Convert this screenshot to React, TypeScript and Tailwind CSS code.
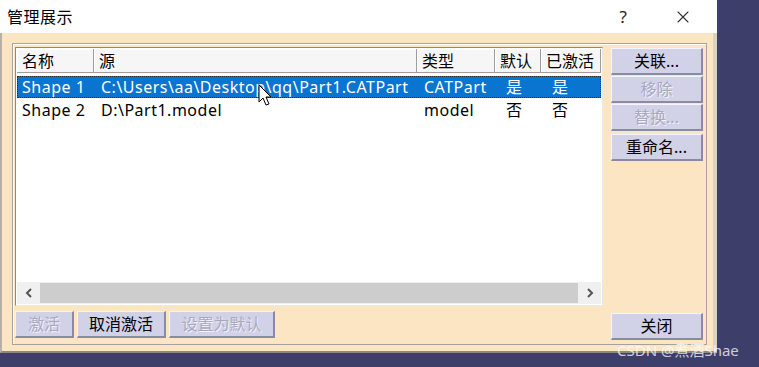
import { X } from "lucide-react";

const COLS = [
  { label: "名称", w: "w-[77px]" },
  { label: "源", w: "w-[323px]" },
  { label: "类型", w: "w-[78px]" },
  { label: "默认", w: "w-[46px]" },
  { label: "已激活", w: "w-[60px]" },
];

const ROWS = [
  { name: "Shape 1", src: "C:\\Users\\aa\\Desktop\\qq\\Part1.CATPart", type: "CATPart", def: "是", act: "是", selected: true },
  { name: "Shape 2", src: "D:\\Part1.model", type: "model", def: "否", act: "否", selected: false },
];

function CatButton({ label, disabled, className = "" }: { label: string; disabled?: boolean; className?: string }) {
  return (
    <div
      className={
        "flex items-center justify-center h-[27px] bg-[#d1d1e8] border-t border-l border-t-[#f4f4ff] border-l-[#f4f4ff] border-b-2 border-r-2 border-b-[#8a8aa0] border-r-[#8a8aa0] text-[16px] leading-none " +
        (disabled ? "text-[#a9a9bd] [text-shadow:1px_1px_0_#f2f2ff] " : "text-black ") +
        className
      }
    >
      {label}
    </div>
  );
}

export default function App() {
  return (
    <div
      className="relative w-[759px] h-[367px] bg-[#3e3e6b] overflow-hidden"
      style={{ fontFamily: '"Noto Sans", "Noto Sans CJK SC", sans-serif' }}
    >
      {/* dialog */}
      <div className="w-[717px] h-[353px] flex flex-col bg-white">
        {/* title bar */}
        <div className="h-[33px] flex items-center pl-[7px] pr-[24px] shrink-0">
          <span className="text-[16px] text-black tracking-[0.5px]">管理展示</span>
          <span className="ml-auto text-[17px] text-[#222] mr-[46px]">?</span>
          <X className="w-[20px] h-[20px] text-[#333]" strokeWidth={1.3} />
        </div>

        {/* body */}
        <div className="flex-1 bg-[#fce5c3] border-l-2 border-r-4 border-b-2 border-l-[#b8b0a4] border-r-[#d8d2c8] border-b-[#8c8780] pt-[10px] pl-[10px] pr-[6px] pb-[6px] flex">
          {/* group box */}
          <div className="flex-1 border border-[#a8a39a] shadow-[inset_1px_1px_0_#ffffff] pt-[3px] pl-[2px] pr-[3px] grid grid-cols-[588px_92px] grid-rows-[259px_auto] gap-x-[8px] gap-y-[5px] content-start">
            {/* list view */}
            <div className="bg-white border border-[#8a8a8a] border-b-[#e8e8e8] border-r-[#e8e8e8] flex flex-col">
              <div className="flex mt-[1px] ml-[1px] h-[24px] shrink-0">
                {COLS.map((c) => (
                  <div
                    key={c.label}
                    className={c.w + " h-full flex items-center pl-[5px] text-[16px] text-black bg-[#f6f6f6] border-r border-b border-r-[#9c9c9c] border-b-[#9c9c9c] shadow-[inset_1px_1px_0_#ffffff]"}
                  >
                    {c.label}
                  </div>
                ))}
              </div>
              <div className="flex flex-col mt-[3px] ml-[1px] gap-[1px]">
                {ROWS.map((r) => (
                  <div
                    key={r.name}
                    className={
                      "flex w-[584px] h-[22px] items-center text-[16px] tracking-[0.5px] " +
                      (r.selected ? "bg-[#0a74d1] text-white outline outline-1 outline-dotted outline-[#2a2a2a] -outline-offset-1" : "text-black")
                    }
                  >
                    <div className="w-[77px] pl-[5px] whitespace-nowrap">{r.name}</div>
                    <div className="w-[323px] pl-[7px] whitespace-nowrap overflow-hidden">{r.src}</div>
                    <div className="w-[78px] pl-[7px]">{r.type}</div>
                    <div className="w-[46px] pl-[11px]">{r.def}</div>
                    <div className="w-[60px] pl-[11px]">{r.act}</div>
                  </div>
                ))}
              </div>
              {/* horizontal scrollbar */}
              <div className="mt-auto mb-[1px] ml-[1px] mr-[1px] h-[22px] flex bg-[#f0f0f0]">
                <div className="w-[23px] flex items-center justify-center">
                  <svg width="10" height="12" viewBox="0 0 10 12">
                    <path d="M7 2 L3 6 L7 10" fill="none" stroke="#555" strokeWidth="2" />
                  </svg>
                </div>
                <div className="flex-1 bg-[#cdcdcd] my-[1px]" />
                <div className="w-[23px] flex items-center justify-center">
                  <svg width="10" height="12" viewBox="0 0 10 12">
                    <path d="M3 2 L7 6 L3 10" fill="none" stroke="#555" strokeWidth="2" />
                  </svg>
                </div>
              </div>
            </div>

            {/* right buttons */}
            <div className="flex flex-col pt-[1px]">
              <CatButton label="关联..." />
              <CatButton label="移除" disabled className="mt-[1px]" />
              <CatButton label="替换..." disabled className="mt-[1px]" />
              <CatButton label="重命名..." className="mt-[3px]" />
            </div>

            {/* bottom buttons */}
            <div className="flex gap-[3px]">
              <CatButton label="激活" disabled className="w-[59px]" />
              <CatButton label="取消激活" className="w-[89px]" />
              <CatButton label="设置为默认" disabled className="w-[106px]" />
            </div>
            <CatButton label="关闭" className="mt-[2px] h-[26px]" />
          </div>
        </div>
      </div>

      {/* mouse cursor */}
      <svg className="absolute left-[258px] top-[84px]" width="16" height="24" viewBox="0 0 16 24">
        <path d="M1 1 L1 18 L5 14 L8 21 L11 20 L8 13 L13 13 Z" fill="#ffffff" stroke="#000" strokeWidth="1" />
      </svg>

      {/* watermark */}
      <div className="absolute left-[617px] top-[339px] text-[15px] text-white/75 whitespace-nowrap">CSDN @煮酒Shae</div>
    </div>
  );
}
